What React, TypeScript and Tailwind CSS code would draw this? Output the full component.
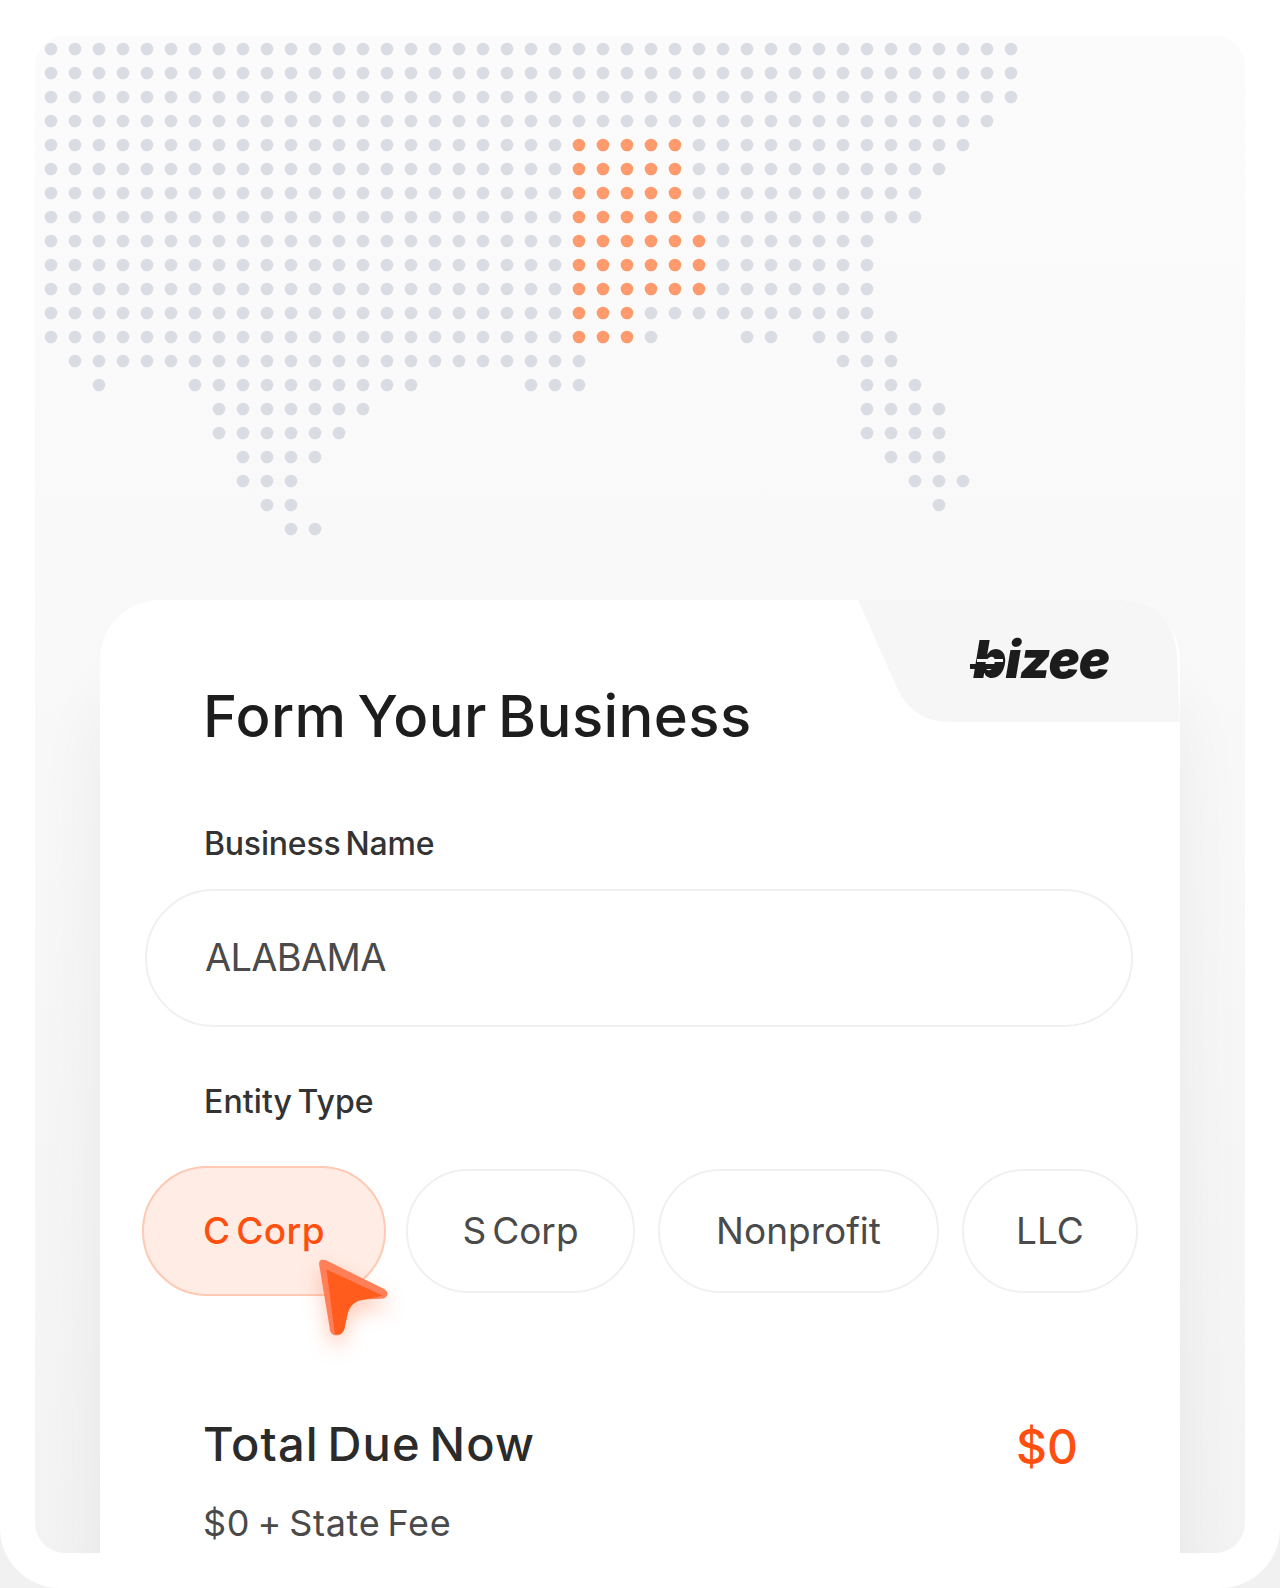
import React from 'react';

// [from, to] column ranges per row of the dot map
const mapRows: [number, number][][] = [
  [[0, 40]],
  [[0, 40]],
  [[0, 40]],
  [[0, 39]],
  [[0, 38]],
  [[0, 37]],
  [[0, 36]],
  [[0, 36]],
  [[0, 34]],
  [[0, 34]],
  [[0, 34]],
  [[0, 34]],
  [[0, 25], [29, 30], [32, 35]],
  [[1, 22], [33, 35]],
  [[2, 2], [6, 15], [20, 22], [34, 36]],
  [[7, 13], [34, 37]],
  [[7, 12], [34, 37]],
  [[8, 11], [35, 37]],
  [[8, 10], [36, 38]],
  [[9, 10], [37, 37]],
  [[10, 11]],
];

const isOrange = (col: number, row: number) => {
  if (col < 22) return false;
  if (row >= 4 && row <= 7) return col <= 26;
  if (row >= 8 && row <= 10) return col <= 27;
  if (row === 11 || row === 12) return col <= 24;
  return false;
};

function DotMap() {
  const dots: React.ReactNode[] = [];
  mapRows.forEach((ranges, row) => {
    ranges.forEach(([from, to]) => {
      for (let col = from; col <= to; col++) {
        dots.push(
          <circle
            key={`${row}-${col}`}
            cx={16 + col * 24}
            cy={13 + row * 24}
            r={6.3}
            fill={isOrange(col, row) ? '#ff9a6e' : '#d9dce3'}
          />
        );
      }
    });
  });
  return (
    <svg width="1210" height="564" viewBox="0 0 1210 564" className="block shrink-0">
      {dots}
    </svg>
  );
}

function Cursor() {
  return (
    <svg
      width="77"
      height="81"
      viewBox="0 0 72 78"
      className="absolute left-[173px] top-[91px] drop-shadow-[0_10px_10px_rgba(255,90,30,0.3)]"
    >
      <path
        d="M3 8 Q2 1 9 3 L66 31 Q72 36 65 40 L47 41 Q33 42 30 56 L27 70 Q24 77 17 75 Q13 74 13 68 Z"
        fill="#ff8058"
      />
      <path
        d="M10 12 L64 37 L47 41 Q33 42 30 56 L27 70 Q24 76 18 74 Z"
        fill="#ff5c1e"
      />
    </svg>
  );
}

function Pill({ label, width }: { label: string; width: string }) {
  return (
    <div
      className={`${width} h-[124px] rounded-[62px] border-2 border-[#f0f0f0] bg-white flex items-center justify-center text-[37px] text-[#4a4a4a] [word-spacing:-0.12em]`}
    >
      {label}
    </div>
  );
}

function Logo() {
  return (
    <div className="absolute right-[71px] top-[34px] flex items-center">
      <span className="text-[52px] leading-[52px] font-black italic tracking-[-1px] text-[#1c1c1c]">
        bizee
      </span>
      <span className="absolute left-[-3px] top-[30px] w-[30px] h-[5px] bg-[#1c1c1c]" />
      <span className="absolute left-[4px] top-[25px] w-[26px] h-[3px] bg-[#f6f6f6]" />
    </div>
  );
}

export default function App() {
  return (
    <div className="w-[1280px] h-[1588px] bg-[#f1f1f1] overflow-hidden font-['Inter',sans-serif]">
      <div className="w-full h-full bg-white rounded-b-[60px] pt-[36px] px-[35px] pb-[35px]">
        <div className="h-full rounded-[30px] overflow-hidden flex flex-col bg-gradient-to-b from-[#fbfbfb] via-[#f8f8f8] to-[#f3f3f3]">
          <DotMap />
          <div className="relative ml-[65px] w-[1080px] flex-1 bg-white rounded-t-[60px] shadow-[0_90px_70px_rgba(0,0,0,0.06)]">
            {/* notch with the logo */}
            <svg
              width="326"
              height="124"
              viewBox="0 0 326 124"
              className="absolute right-0 top-0"
            >
              <path
                d="M4 0 L268 0 Q322 4 323 60 L326 122 L96 122 Q60 122 44 90 Z"
                fill="#f6f6f6"
              />
            </svg>
            <Logo />

            <div className="px-[42px] pt-[82px]">
              <h1 className="pl-[61px] text-[58px] leading-[68px] font-medium tracking-[0.4px] [word-spacing:-0.08em] text-[#1d1d1d]">
                Form Your Business
              </h1>
              <p className="pl-[62px] mt-[74px] text-[32px] leading-[40px] font-medium tracking-[-0.2px] [word-spacing:-0.1em] text-[#333333]">
                Business Name
              </p>
              <div className="ml-[3px] mt-[25px] w-[988px] h-[138px] pb-[2px] rounded-[69px] border-2 border-[#f0f0f0] flex items-center pl-[58px] text-[38px] text-[#4a4a4a] tracking-[-0.7px]">
                ALABAMA
              </div>
              <p className="pl-[62px] mt-[55px] text-[32px] leading-[40px] font-medium tracking-[0.1px] [word-spacing:-0.1em] text-[#333333]">
                Entity Type
              </p>
              <div className="relative mt-[44px] flex items-center">
                <div className="w-[244px] h-[130px] rounded-[65px] border-2 border-[#ffc9b3] bg-[#ffece5] flex items-center justify-center text-[37px] font-medium tracking-[0.4px] text-[#ff4f0f] [word-spacing:-0.12em]">
                  C Corp
                </div>
                <div className="ml-[20px] flex items-center gap-[23px]">
                  <Pill label="S Corp" width="w-[229px]" />
                  <Pill label="Nonprofit" width="w-[281px]" />
                  <Pill label="LLC" width="w-[176px]" />
                </div>
                <Cursor />
              </div>
              <div className="mt-[120px] pl-[61px] pr-[60px] flex items-start justify-between">
                <p className="text-[47px] leading-[56px] font-medium tracking-[1.1px] [word-spacing:-0.1em] text-[#2b2b2b]">
                  Total Due Now
                </p>
                <p className="mt-[3px] text-[48px] leading-[56px] font-medium text-[#ff4f0f]">$0</p>
              </div>
              <p className="pl-[61px] mt-[26px] text-[36px] leading-[44px] tracking-[0.7px] [word-spacing:-0.1em] text-[#4a4a4a]">
                $0 + State Fee
              </p>
            </div>
          </div>
        </div>
      </div>
    </div>
  );
}
